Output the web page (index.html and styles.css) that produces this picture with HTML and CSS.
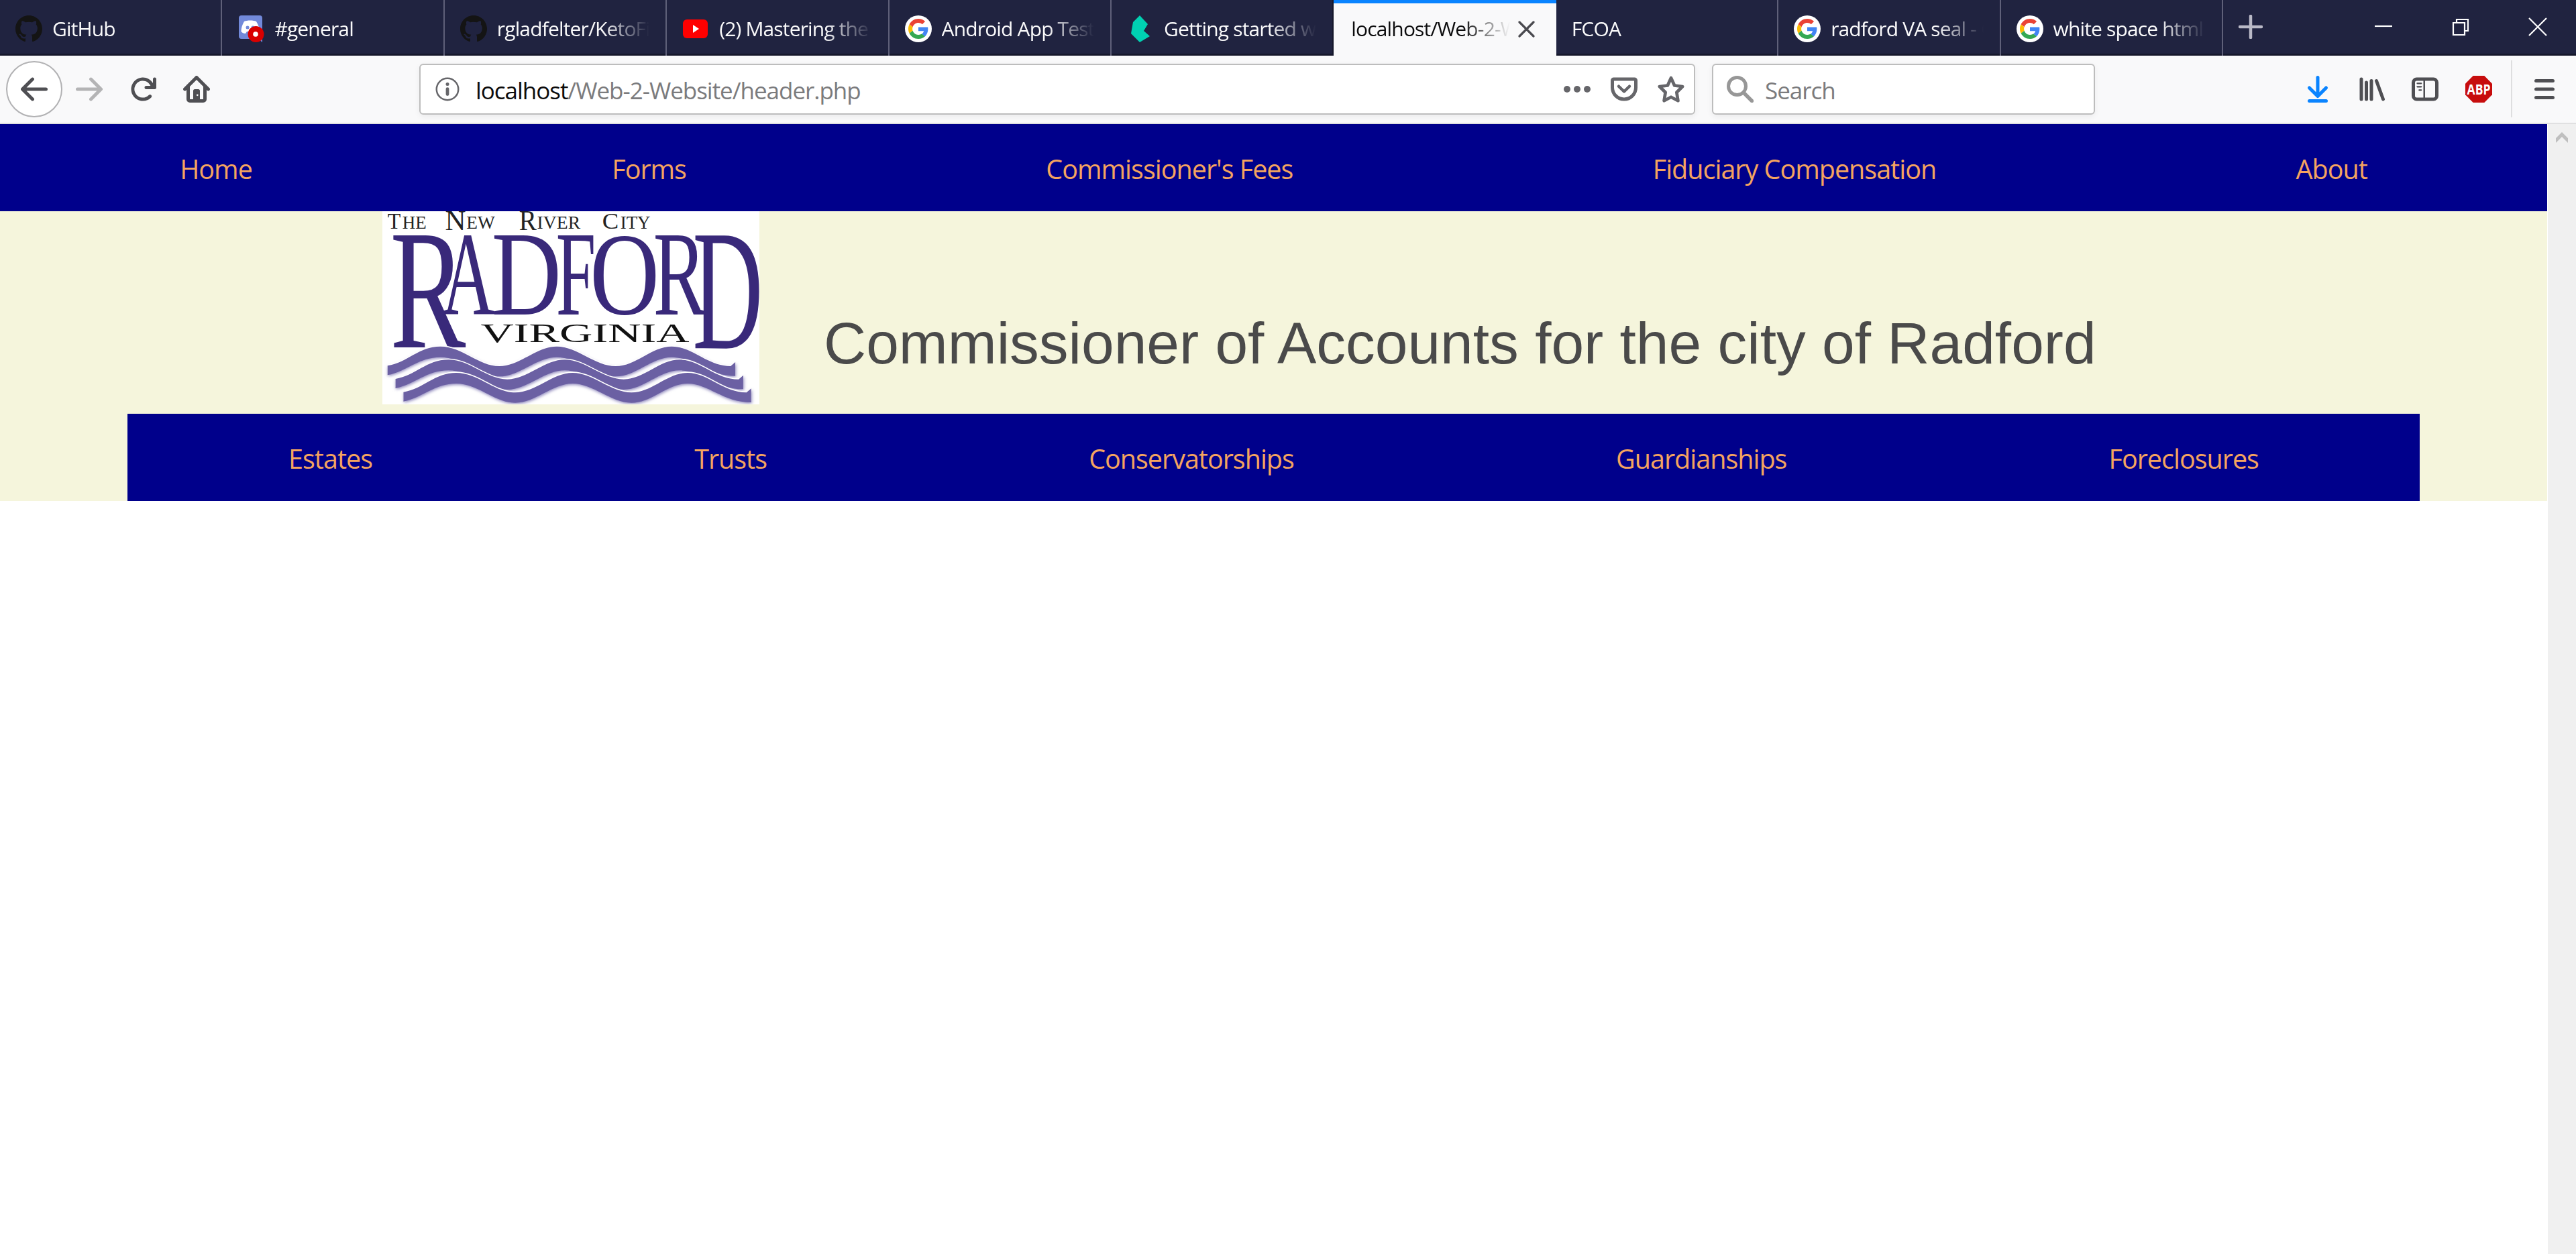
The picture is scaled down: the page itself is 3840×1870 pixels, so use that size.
FILE: index.html
```html
<!DOCTYPE html>
<html lang="en">
<head>
<meta charset="utf-8">
<title>FCOA</title>
<link rel="stylesheet" href="styles.css">
</head>
<body>
<svg class="defs" width="0" height="0" aria-hidden="true">
  <symbol id="github" viewBox="0 0 16 16"><path fill="#141414" d="M8 0C3.58 0 0 3.58 0 8c0 3.54 2.29 6.53 5.47 7.59.4.07.55-.17.55-.38 0-.19-.01-.82-.01-1.49-2.01.37-2.53-.49-2.69-.94-.09-.23-.48-.94-.82-1.13-.28-.15-.68-.52-.01-.53.63-.01 1.08.58 1.23.82.72 1.21 1.87.87 2.33.66.07-.52.28-.87.51-1.07-1.78-.2-3.64-.89-3.64-3.95 0-.87.31-1.59.82-2.15-.08-.2-.36-1.02.08-2.12 0 0 .67-.21 2.2.82.64-.18 1.32-.27 2-.27s1.36.09 2 .27c1.53-1.04 2.2-.82 2.2-.82.44 1.1.16 1.92.08 2.12.51.56.82 1.27.82 2.15 0 3.07-1.87 3.75-3.65 3.95.29.25.54.73.54 1.48 0 1.07-.01 1.93-.01 2.2 0 .21.15.46.55.38A8.01 8.01 0 0 0 16 8c0-4.42-3.58-8-8-8z"/></symbol>
  <symbol id="google" viewBox="0 0 40 40"><circle cx="20" cy="20" r="20" fill="#fff"/><g transform="translate(5 5) scale(.625)"><path fill="#EA4335" d="M24 9.5c3.54 0 6.71 1.22 9.21 3.6l6.85-6.85C35.9 2.38 30.47 0 24 0 14.62 0 6.51 5.38 2.56 13.22l7.98 6.19C12.43 13.72 17.74 9.5 24 9.5z"/><path fill="#4285F4" d="M46.98 24.55c0-1.57-.15-3.09-.38-4.55H24v9.02h12.94c-.58 2.96-2.26 5.48-4.78 7.18l7.73 6c4.51-4.18 7.09-10.36 7.09-17.65z"/><path fill="#FBBC05" d="M10.53 28.59c-.48-1.45-.76-2.99-.76-4.59s.27-3.14.76-4.59l-7.98-6.19C.92 16.46 0 20.12 0 24c0 3.88.92 7.54 2.56 10.78l7.97-6.19z"/><path fill="#34A853" d="M24 48c6.48 0 11.93-2.13 15.89-5.81l-7.73-6c-2.15 1.45-4.92 2.3-8.16 2.3-6.26 0-11.57-4.22-13.47-9.91l-7.98 6.19C6.51 42.62 14.62 48 24 48z"/></g></symbol>
</svg>

<header class="tabs">
  <div class="tab"><svg class="fav"><use href="#github"/></svg><span class="label">GitHub</span></div>
  <div class="tab"><svg class="fav" viewBox="0 0 40 40"><path fill="#7289da" d="M6 0h27a4 4 0 0 1 4 4v36l-6-5H6a4 4 0 0 1-4-4V4a4 4 0 0 1 4-4z"/><path fill="#fff" d="M10 9c4-2 14-2 18 0 3 5 5 10 5 15-2 2-5 3-7 3l-2-3H14l-2 3c-3 0-5-1-6.500-3 0-5 1.500-10 4.500-15z"/><circle cx="15" cy="18" r="2.500" fill="#7289da"/><circle cx="23" cy="18" r="2.500" fill="#7289da"/><circle cx="27.500" cy="28" r="12" fill="#d90000"/><circle cx="27" cy="28" r="3.800" fill="#fff"/></svg><span class="label">#general</span></div>
  <div class="tab"><svg class="fav"><use href="#github"/></svg><span class="label">rgladfelter/KetoFit</span></div>
  <div class="tab"><svg class="fav" viewBox="0 0 40 40"><rect x="1" y="6" width="37" height="28" rx="6" fill="#f00"/><path d="M16 14v12l9-6z" fill="#fff"/></svg><span class="label">(2) Mastering the</span></div>
  <div class="tab"><svg class="fav"><use href="#google"/></svg><span class="label">Android App Testi</span></div>
  <div class="tab"><svg class="fav" viewBox="0 0 40 40"><path fill="#00d1b2" d="M19 0l12 13-6 10 9 8-15 9L6 27 9 10z"/></svg><span class="label">Getting started wi</span></div>
  <div class="tab active"><span class="label">localhost/Web-2-W</span><svg class="tab-close" viewBox="0 0 26 26"><path d="M2 2l21 21M23 2L2 23" stroke="#4a4a4f" stroke-width="3.200" stroke-linecap="round"/></svg></div>
  <div class="tab plain"><span class="label">FCOA</span></div>
  <div class="tab"><svg class="fav"><use href="#google"/></svg><span class="label">radford VA seal - G</span></div>
  <div class="tab"><svg class="fav"><use href="#google"/></svg><span class="label">white space html</span></div>
  <div class="new-tab"><svg viewBox="0 0 36 36" width="36" height="36"><path d="M18 2v32M2 18h32" stroke="#b9b9c6" stroke-width="4.500" stroke-linecap="round"/></svg></div>
  <div class="window-buttons">
    <svg viewBox="0 0 28 28"><path d="M1 13h26" stroke="#fff" stroke-width="2.200"/></svg>
    <svg viewBox="0 0 28 28"><path d="M3 8h17v18H3zM8 8V3h17v17h-5" fill="none" stroke="#fff" stroke-width="2.200"/></svg>
    <svg viewBox="0 0 28 28"><path d="M1 1l26 26M27 1L1 27" stroke="#fff" stroke-width="2.200"/></svg>
  </div>
</header>

<div class="toolbar">
  <div class="back"><svg class="ico" viewBox="0 0 16 16"><path d="M15 7H3.414l4.293-4.293a1 1 0 0 0-1.414-1.414l-6 6a1 1 0 0 0 0 1.414l6 6a1 1 0 0 0 1.414-1.414L3.414 9H15a1 1 0 0 0 0-2z"/></svg></div>
  <svg class="ico faded" viewBox="0 0 16 16"><path transform="matrix(-1 0 0 1 16 0)" d="M15 7H3.414l4.293-4.293a1 1 0 0 0-1.414-1.414l-6 6a1 1 0 0 0 0 1.414l6 6a1 1 0 0 0 1.414-1.414L3.414 9H15a1 1 0 0 0 0-2z"/></svg>
  <svg class="ico" viewBox="0 0 16 16"><path d="M15 1a1 1 0 0 0-1 1v2.418A6.995 6.995 0 1 0 8 15a6.954 6.954 0 0 0 4.950-2.050 1 1 0 0 0-1.414-1.414A5.019 5.019 0 1 1 12.549 6H10a1 1 0 0 0 0 2h5a1 1 0 0 0 1-1V2a1 1 0 0 0-1-1z"/></svg>
  <svg class="ico" viewBox="0 0 16 16"><path fill-rule="evenodd" d="M15.707 7.293l-7-7a1 1 0 0 0-1.414 0l-7 7a1 1 0 0 0 1.414 1.414L2 8.414V14a2 2 0 0 0 2 2h8a2 2 0 0 0 2-2V8.414l.293.293a1 1 0 0 0 1.414-1.414zM12 14h-2V9a1 1 0 0 0-1-1H7a1 1 0 0 0-1 1v5H4V6.414l4-4 4 4z"/><circle cx="8.500" cy="11.500" r=".55" fill="#f9f9fa"/></svg>

  <div class="field url">
    <svg class="ico mid" viewBox="0 0 16 16"><circle cx="8" cy="8" r="6.500" fill="none" stroke="#66666a"/><circle cx="8" cy="5" r="1"/><path d="M8 7.800v3.200" stroke="#66666a" stroke-width="1.900" stroke-linecap="round"/></svg>
    <span class="address"><b>localhost</b>/Web-2-Website/header.php</span>
    <svg class="ico mid" viewBox="0 0 16 16"><circle cx="2" cy="8" r="2"/><circle cx="8" cy="8" r="2"/><circle cx="14" cy="8" r="2"/></svg>
    <svg class="ico mid" viewBox="0 0 16 16"><path d="M1.800 2h12.400a.8.8 0 0 1 .8.8V7a7 7 0 0 1-14 0V2.800a.8.8 0 0 1 .8-.8z" fill="none" stroke="#66666a" stroke-width="2"/><path d="M4.800 6.300L8 9.400l3.200-3.100" fill="none" stroke="#66666a" stroke-width="1.800" stroke-linecap="round" stroke-linejoin="round"/></svg>
    <svg class="ico mid" viewBox="0 0 16 16"><path d="M8 1.300l2.050 4.500 4.800.6-3.500 3.500.8 5L8 12.700l-4.150 2.200.8-5-3.500-3.500 4.800-.6z" fill="none" stroke="#66666a" stroke-width="1.900" stroke-linejoin="round"/></svg>
  </div>
  <div class="field search">
    <svg class="ico light" viewBox="0 0 16 16"><circle cx="6.200" cy="6.200" r="5.200" fill="none" stroke="#979797" stroke-width="2"/><path d="M10 10l5 5" stroke="#979797" stroke-width="2.200" stroke-linecap="round"/></svg>
    <span class="hint">Search</span>
  </div>

  <div class="actions">
    <svg class="ico" viewBox="0 0 16 16"><path d="M8 1v11M3 7.200l5 5 5-5M3 15h10" fill="none" stroke="#0a84ff" stroke-width="2" stroke-linecap="round" stroke-linejoin="round"/></svg>
    <svg class="ico" viewBox="0 0 16 16"><path d="M2 2v12M5 4v10M8 3v11M11 3l4 11" fill="none" stroke="#4f4f53" stroke-width="2" stroke-linecap="round"/></svg>
    <svg class="ico" viewBox="0 0 16 16"><rect x="1" y="2" width="14" height="12" rx="2" fill="none" stroke="#4f4f53" stroke-width="2"/><path d="M7.500 2v12" stroke="#4f4f53"/><path d="M3.400 4.500h2.300M3.400 6.500h2.300M4.500 8.500h1.200" stroke="#4f4f53" stroke-linecap="round" stroke-width=".9"/></svg>
    <svg class="ico" viewBox="0 0 40 40"><path fill="#c70d0d" d="M11.700 0h16.600L40 11.700v16.600L28.300 40H11.700L0 28.300V11.700z"/><text class="abp" x="20" y="27.500" text-anchor="middle" textLength="35" lengthAdjust="spacingAndGlyphs">ABP</text></svg>
    <i class="rule"></i>
    <svg class="ico" viewBox="0 0 16 16"><path d="M3 3h10M3 8h10M3 13h10" stroke="#4f4f53" stroke-width="2" stroke-linecap="round"/></svg>
  </div>
</div>

<div class="viewport">
  <main class="page">
    <nav class="bar main-nav"><a>Home</a><a>Forms</a><a>Commissioner's Fees</a><a>Fiduciary Compensation</a><a>About</a></nav>
    <section class="banner">
      <div class="brand">
        <svg class="logo" viewBox="73 75 1377 864" preserveAspectRatio="none">
          <defs>
            <filter id="soft" x="-5%" y="-20%" width="110%" height="150%"><feGaussianBlur stdDeviation="6"/></filter>
            <path id="wave" d="M92 766C165 752 205 680 285 680S425 768 500 768 635 680 710 680 850 768 925 768 1055 680 1130 680 1260 768 1345 768L1362 750V812C1260 812 1205 728 1130 728S1000 814 925 814 785 728 710 728 575 814 500 814 365 728 285 728 165 790 92 808z"/>
            <g id="band"><use href="#wave" x="2" y="5" fill="#8f88bd" filter="url(#soft)"/><use href="#wave" y="-5" fill="#fff"/><use href="#wave" fill="#6b60a3"/></g>
          </defs>
          <rect x="73" y="75" width="1377" height="864" fill="#fff"/>
          <g class="tagline">
            <text x="92" y="154" font-size="104" textLength="48" lengthAdjust="spacingAndGlyphs">T</text><text x="146" y="154" font-size="84" textLength="88" lengthAdjust="spacingAndGlyphs">HE</text>
            <text x="302" y="158" font-size="124" textLength="76" lengthAdjust="spacingAndGlyphs">N</text><text x="380" y="154" font-size="84" textLength="104" lengthAdjust="spacingAndGlyphs">EW</text>
            <text x="572" y="158" font-size="124" textLength="64" lengthAdjust="spacingAndGlyphs">R</text><text x="638" y="154" font-size="84" textLength="158" lengthAdjust="spacingAndGlyphs">IVER</text>
            <text x="876" y="154" font-size="104" textLength="60" lengthAdjust="spacingAndGlyphs">C</text><text x="942" y="154" font-size="84" textLength="110" lengthAdjust="spacingAndGlyphs">ITY</text>
          </g>
          <g class="wordmark">
            <text transform="translate(101 685) scale(4.150 7.620)">R</text>
            <text transform="translate(289 537) scale(2.700 5.350)">A</text>
            <text transform="translate(472 537) scale(3.530 5.380)">D</text>
            <text transform="translate(707 537) scale(2.620 5.380)">F</text>
            <text transform="translate(831 535) scale(3.520 5.300)">O</text>
            <text transform="translate(1062 537) scale(2.900 5.380)">R</text>
            <text transform="translate(1206 688) scale(3.560 7.700)">D</text>
          </g>
          <text class="state" x="432" y="660" textLength="762" lengthAdjust="spacingAndGlyphs">VIRGINIA</text>
          <use href="#band"/><use href="#band" x="29" y="59"/><use href="#band" x="58" y="118"/>
        </svg>
        <h1>Commissioner of Accounts for the city of Radford</h1>
      </div>
      <nav class="bar sub-nav"><a>Estates</a><a>Trusts</a><a>Conservatorships</a><a>Guardianships</a><a>Foreclosures</a></nav>
    </section>
  </main>
  <aside class="scrollbar"><svg viewBox="0 0 18 16" width="18" height="16"><path d="M9 0l9 9v7L9 7 0 16V9z" fill="#bfbfbf"/></svg></aside>
</div>
</body>
</html>
```
FILE: styles.css
```css
* { box-sizing: border-box; }
body {
  margin: 0;
  height: 1870px;
  display: flex;
  flex-direction: column;
  overflow: hidden;
  background: #fff;
  font-family: "Open Sans", "Noto Sans", sans-serif;
}
svg { display: block; flex: none; }
.defs { position: absolute; }

/* Tab strip */
.tabs {
  height: 83px;
  flex: none;
  display: flex;
  background: #202340;
  box-shadow: inset 0 -3px #15172b;
}
.tab {
  width: 331.400px;
  flex: none;
  display: flex;
  align-items: center;
  padding: 3px 24px 0 23px;
  border-right: 2px solid #5f6079;
  color: #f9f9fa;
  font-size: 30px;
}
.fav { width: 40px; height: 40px; margin-right: 15px; }
.label {
  flex: 1;
  overflow: hidden;
  white-space: nowrap;
  line-height: 60px;
  letter-spacing: -.85px;
  mask-image: linear-gradient(to right, #000 calc(100% - 70px), transparent);
}
.tab:nth-child(6) { border-right-color: #15172b; }
.tab.active {
  padding: 0 31px 0 26px;
  background: #f9f9fa;
  border-top: 5px solid #0a84ff;
  border-right: 0;
  color: #0c0c0d;
}
.tab.active .label { margin-top: -2px; }
.tab-close { width: 26px; height: 26px; margin-left: 12px; }
.new-tab { margin: 22px 0 0 23px; }
.window-buttons { display: flex; gap: 87px; margin: 26px 43px 0 auto; }
.window-buttons svg { width: 28px; height: 28px; }

/* Navigation toolbar */
.toolbar {
  height: 102px;
  flex: none;
  display: flex;
  align-items: center;
  padding: 0 27px 1px 9px;
  background: #f9f9fa;
  border-bottom: 2px solid #e0e0e1;
}
.ico { width: 40px; height: 40px; margin-right: 40px; fill: #4f4f53; }
.back {
  width: 84px;
  height: 84px;
  margin-right: 20px;
  padding: 20px;
  border: 2px solid #b1b1b3;
  border-radius: 50%;
  background: #fff;
}
.back .ico { margin: 0; }
.faded { fill: #b4b4b5; }
.mid { fill: #66666a; }
.field {
  height: 76px;
  display: flex;
  align-items: center;
  flex: none;
  border: 2px solid #bdbdbd;
  border-radius: 6px;
  background: #fff;
  box-shadow: 0 3px 10px rgba(0, 0, 0, .06);
  font-size: 35px;
  color: #7b7b7d;
}
.url { width: 1902px; margin-left: 272px; padding: 0 14px 0 20px; }
.url .ico { margin-right: 30px; }
.url .ico:first-child { margin-right: 22px; }
.url .ico:last-child { margin-right: 0; }
.address { flex: 1; padding-top: 3px; letter-spacing: -1.030px; }
.address b { font-weight: 400; color: #0c0c0d; }
.search { width: 571px; margin-left: 25px; padding-left: 20px; }
.search .ico { margin-right: 17px; }
.hint { padding-top: 3px; letter-spacing: -1px; }
.actions { display: flex; align-items: center; margin-left: auto; }
.actions .ico:last-child { margin-right: 0; }
.abp { fill: #fff; font: 700 21px "Open Sans", sans-serif; }
.rule { width: 2px; height: 85px; margin: 0 28px 0 -12px; background: #dededf; }

/* Page area */
.viewport { flex: 1; display: flex; }
.page { width: 3797px; }
.bar {
  height: 130px;
  display: flex;
  justify-content: space-around;
  align-items: center;
  padding-top: 4px;
  background: #00008b;
  color: #f4a460;
  font-size: 39.500px;
  letter-spacing: -1px;
}
.banner { height: 432px; background: #f5f5dc; display: flex; flex-direction: column; }
.brand { height: 302px; display: flex; padding-left: 570px; }
.logo { width: 562px; height: 288px; }
.tagline { fill: #222; font-family: "Liberation Serif", serif; }
.wordmark { fill: #39297a; font: 100px "Liberation Serif", serif; }
.state { fill: #111; font: 119px "Liberation Serif", serif; }
h1 {
  margin: 145px 0 0 96px;
  font: 400 87.500px/104px "Liberation Sans", Arial, sans-serif;
  color: #4a4a4a;
  white-space: nowrap;
}
.sub-nav { width: 3417px; margin-left: 190px; }
.scrollbar {
  width: 43px;
  display: flex;
  justify-content: center;
  padding-top: 12px;
  border-left: 1px solid #fff;
  background: #f0f0f0;
}
```
